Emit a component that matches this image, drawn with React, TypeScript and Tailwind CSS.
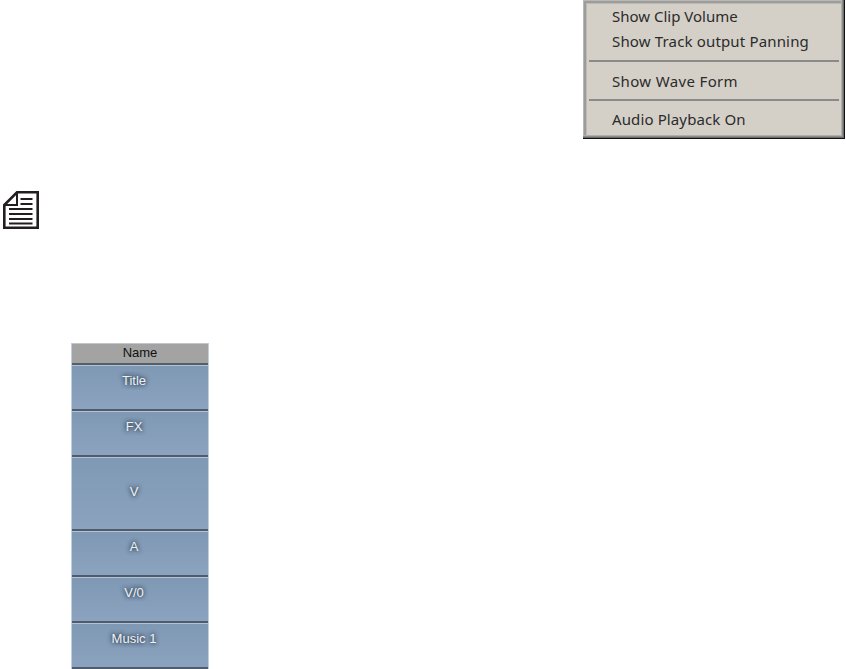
const menuFont = { fontFamily: '"Noto Sans", Tahoma, sans-serif' };

const Note = () => (
  <svg width="36" height="38" viewBox="0 0 36 38" fill="none" stroke="#231f20">
    <path d="M14 1.3H34.7V36.7H1.3V14Z" strokeWidth="2.6" />
    <path d="M14 1.3V14H1.3" strokeWidth="2" />
    <path d="M17.5 8H29.5M17.5 13H29.5M6 18H29.5M6 23H29.5M6 28H29.5M6 32.5H29.5" strokeWidth="2" />
  </svg>
);

const Track = ({ name, tall }: { name: string; tall?: boolean }) => (
  <div
    className={`flex justify-center border-t border-t-[#b3c3d6] border-b-2 border-b-[#4e5c6d] bg-gradient-to-b from-[#7f98b4] to-[#8ba3bf] pr-[12px] ${
      tall ? "h-[74px] pt-[25px]" : "h-[46px] pt-[6px]"
    }`}
  >
    <span className="text-[13px] leading-[18px] text-[#eef1f4] [text-shadow:0_0_4px_#2f3d4d,0_0_5px_#2f3d4d]">
      {name}
    </span>
  </div>
);

export default function App() {
  return (
    <div className="flex h-[669px] w-[846px] flex-col overflow-hidden bg-white" style={{ fontFamily: '"Liberation Sans", sans-serif' }}>
      <div className="flex justify-end pr-[1px]">
        <div
          className="h-[139px] w-[262px] bg-[#d4d0c8] pt-[6px] text-[15px] text-[#2b2b2b] shadow-[inset_-1px_-1px_0_#111,inset_-2px_-2px_0_#6c6c6e,inset_-3px_-3px_0_#8c8c8c,inset_-4px_-4px_0_#b0aeaa,inset_1px_1px_0_#b8b8b6,inset_3px_3px_0_#9c9c9a,inset_4px_4px_0_#bbb9b4]"
          style={menuFont}
        >
          <div className="ml-[29px] h-[25px] leading-[20px]">Show Clip Volume</div>
          <div className="ml-[29px] h-[29px] leading-[20px] tracking-[0.16px]">Show Track output Panning</div>
          <div className="mx-[6px] h-[2px] bg-[#8a8a88]" />
          <div className="ml-[29px] mt-[9px] h-[28px] leading-[20px] tracking-[0.35px]">Show Wave Form</div>
          <div className="mx-[6px] h-[2px] bg-[#8a8a88]" />
          <div className="ml-[29px] mt-[8px] leading-[20px] tracking-[0.12px]">Audio Playback On</div>
        </div>
      </div>
      <div className="ml-[3px] mt-[52px]">
        <Note />
      </div>
      <div className="ml-[71px] mt-[114px] w-[138px] border-x border-x-[#c2cedb]">
        <div className="h-[22px] border-t border-t-[#c2c6cc] border-b-2 border-b-[#555f68] bg-[#a3a3a3] text-center text-[13px] leading-[18px] text-[#111]">
          Name
        </div>
        <Track name="Title" />
        <Track name="FX" />
        <Track name="V" tall />
        <Track name="A" />
        <Track name="V/0" />
        <Track name="Music 1" />
      </div>
    </div>
  );
}
